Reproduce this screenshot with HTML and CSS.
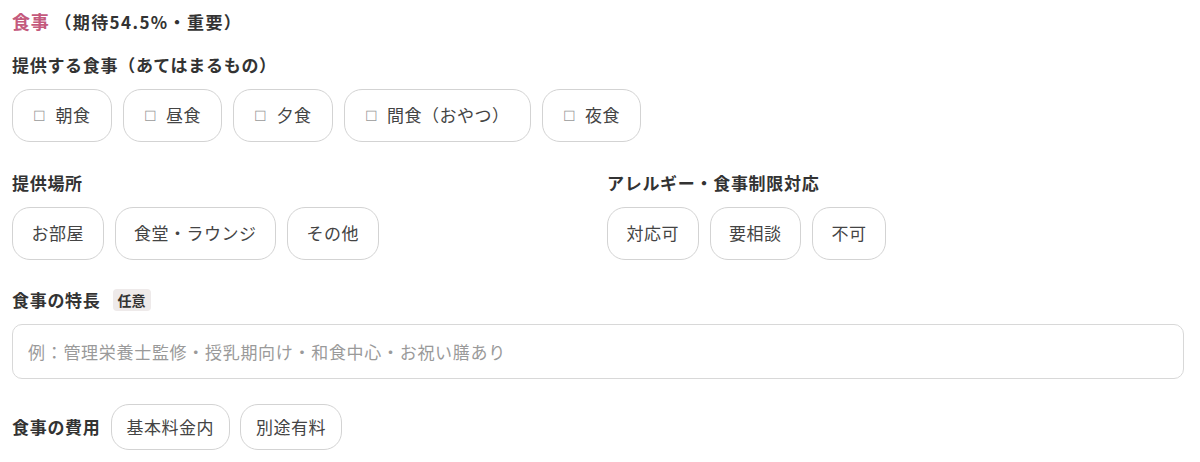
FILE: index.html
```html
<!DOCTYPE html>
<html lang="ja">
<head>
  <meta charset="UTF-8" />
  <meta name="viewport" content="width=device-width, initial-scale=1.0"/>
  <title>食事</title>
  <link rel="stylesheet" href="styles.css">
</head>
<body>
  <div class="section">
    <h2 class="section-title">食事<span class="section-note">（期待54.5%・重要）</span></h2>

    <div class="field">
      <div class="label">提供する食事（あてはまるもの）</div>
      <div class="chips">
        <button class="chip"><span class="box">☐</span>朝食</button>
        <button class="chip"><span class="box">☐</span>昼食</button>
        <button class="chip"><span class="box">☐</span>夕食</button>
        <button class="chip"><span class="box">☐</span>間食（おやつ）</button>
        <button class="chip"><span class="box">☐</span>夜食</button>
      </div>
    </div>

    <div class="field two-cols">
      <div>
        <div class="label">提供場所</div>
        <div class="chips">
          <button class="chip">お部屋</button>
          <button class="chip">食堂・ラウンジ</button>
          <button class="chip">その他</button>
        </div>
      </div>
      <div>
        <div class="label">アレルギー・食事制限対応</div>
        <div class="chips">
          <button class="chip">対応可</button>
          <button class="chip">要相談</button>
          <button class="chip">不可</button>
        </div>
      </div>
    </div>

    <div class="field feature">
      <div class="label">食事の特長<span class="optional">任意</span></div>
      <input class="text-input" type="text" placeholder="例：管理栄養士監修・授乳期向け・和食中心・お祝い膳あり">
    </div>

    <div class="field cost">
      <span class="label">食事の費用</span>
      <button class="chip small">基本料金内</button>
      <button class="chip small">別途有料</button>
    </div>
  </div>
</body>
</html>
```

FILE: styles.css
```css
body {
  margin: 0;
  padding: 0 16px 0 12px;
  background: #fff;
  color: #333;
  font-family: "Noto Sans CJK JP", "Noto Sans", sans-serif;
  letter-spacing: 0.7px;
}

.section-title {
  margin: 8px 0 0;
  font-size: 18px;
  line-height: 26px;
  font-weight: bold;
  color: #c45a7d;
}

.section-note {
  margin-left: 5px;
  font-size: 17px;
  letter-spacing: 1.4px;
  color: #333;
}

.label {
  font-size: 17px;
  line-height: 24px;
  font-weight: bold;
  color: #333;
}

.field {
  margin-top: 18px;
}

.chips {
  display: flex;
  flex-wrap: wrap;
  gap: 11px;
  margin-top: 12px;
}

.chip {
  font-family: inherit;
  font-size: 17px;
  line-height: 24px;
  letter-spacing: 0.5px;
  color: #444;
  background: #fff;
  border: 1px solid #d3d3d3;
  border-radius: 18px;
  padding: 13px 20px 14px;
  display: flex;
  align-items: center;
  cursor: pointer;
}

.box {
  font-size: 14px;
  color: #9a9a9a;
  margin-right: 9px;
}

.two-cols {
  display: grid;
  grid-template-columns: 1fr 1fr;
  gap: 18px;
  margin-top: 29px;
}

.two-cols .chip {
  padding: 13px 18.5px 14px;
}

.feature {
  margin-top: 28px;
}

.optional {
  display: inline-block;
  margin-left: 12px;
  padding: 0 5px;
  font-size: 14px;
  line-height: 22px;
  letter-spacing: 0;
  background: #eeeaea;
  border-radius: 4px;
  vertical-align: 1px;
}

.text-input {
  display: block;
  box-sizing: border-box;
  width: 100%;
  height: 55px;
  margin-top: 12px;
  padding: 0 15px;
  font-family: inherit;
  font-size: 17px;
  letter-spacing: 0.7px;
  color: #333;
  border: 1px solid #d8d8d8;
  border-radius: 10px;
  outline: none;
}

.text-input::placeholder {
  color: #9a9a9a;
}

.cost {
  display: flex;
  align-items: center;
  gap: 10px;
  margin-top: 25px;
}

.chip.small {
  padding: 10px 15px;
}
```
